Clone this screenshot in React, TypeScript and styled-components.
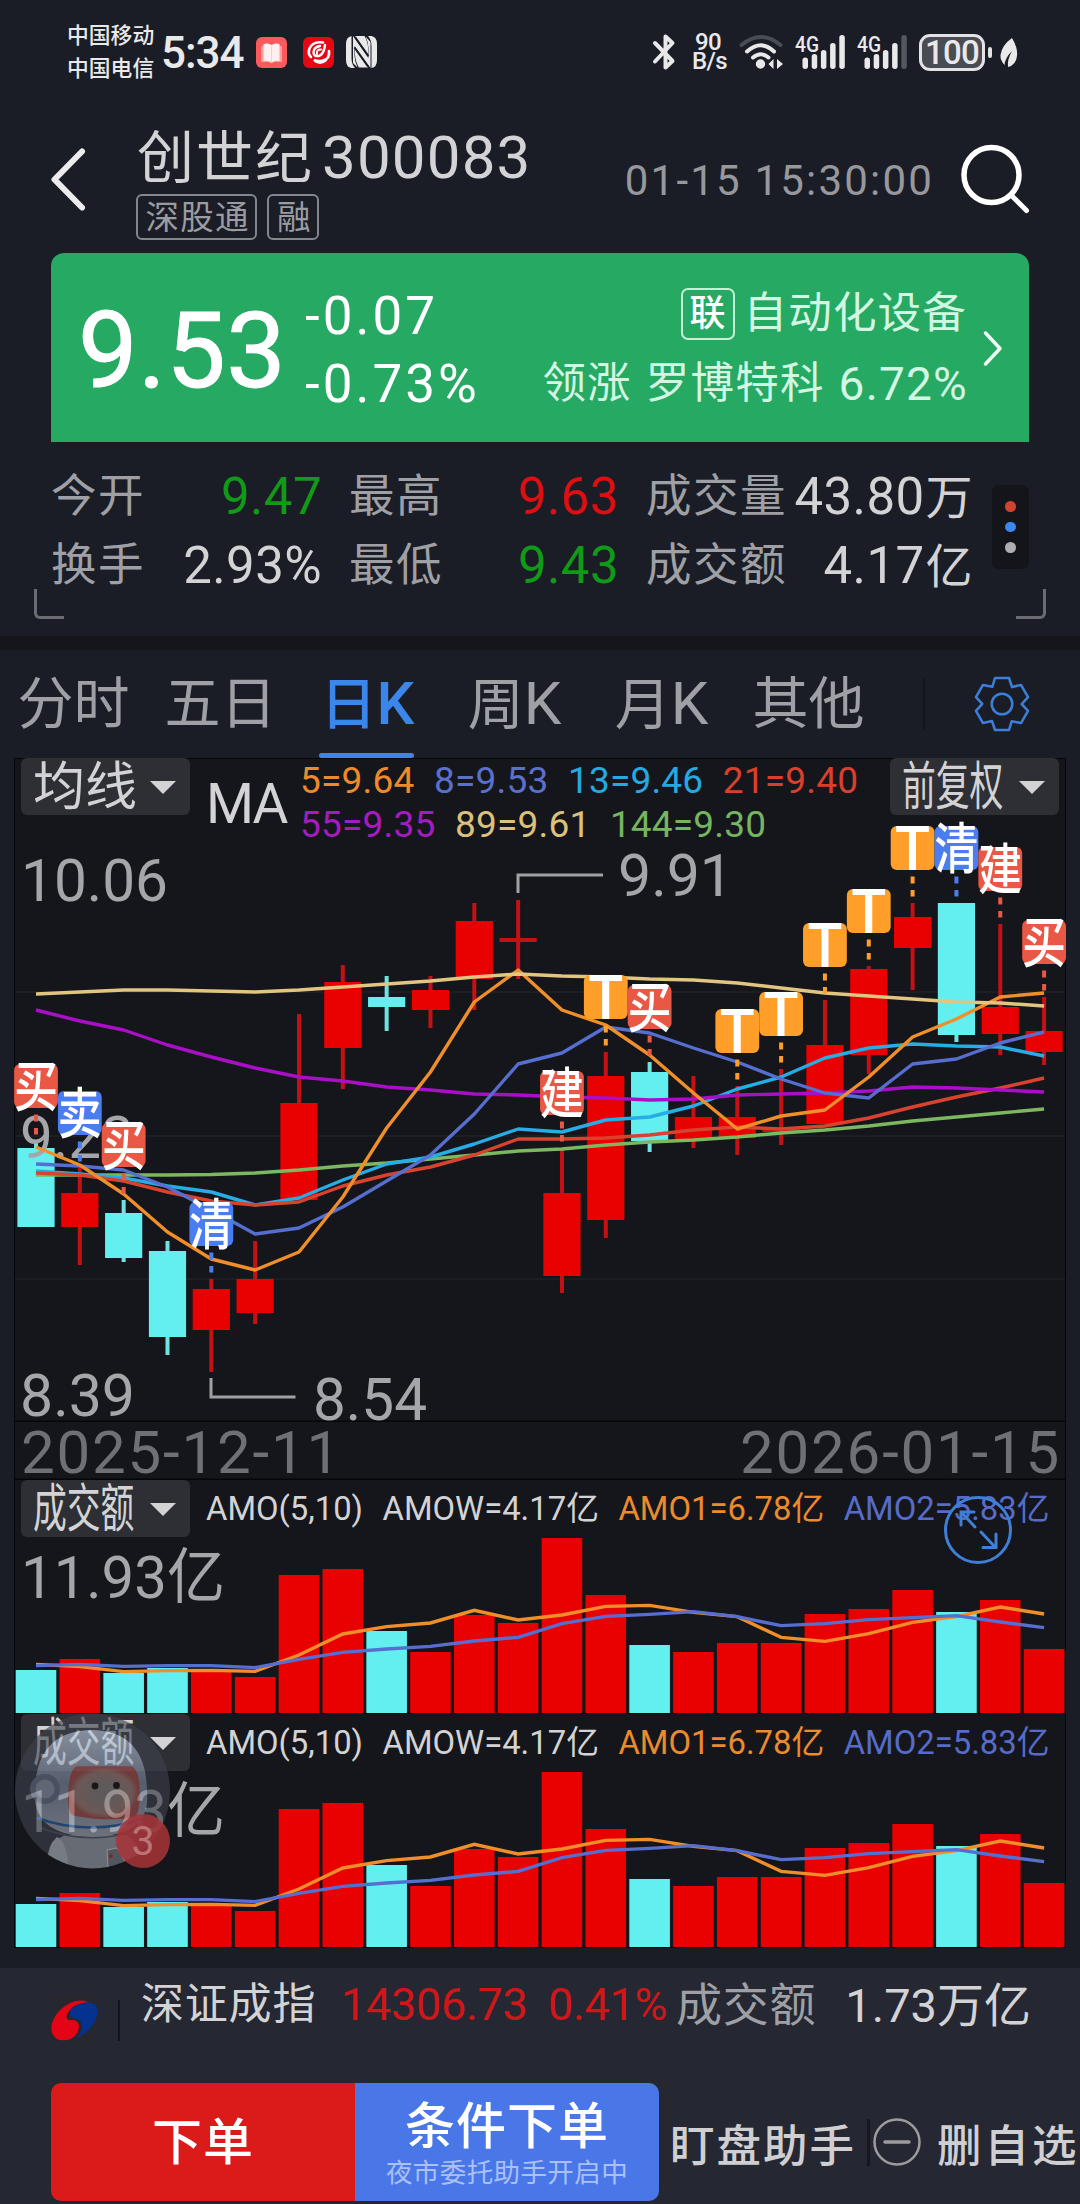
import React from "react";
import styled, { createGlobalStyle, css } from "styled-components";

const FONT = `Roboto, "Noto Sans CJK SC", sans-serif`;

const color = {
  page: "#1b1d26",
  panel: "#15161b",
  footer: "#252732",
  text: "#d3d3d5",
  muted: "#9fa0a5",
  dim: "#6f7075",
  red: "#e90000",
  cyan: "#63efef",
  green: "#26a963",
  blue: "#3b86ea",
  line: "#050609",
};

const Global = createGlobalStyle`
  html, body { margin: 0; padding: 0; background: ${color.page}; }
  body { font-family: ${FONT}; -webkit-font-smoothing: antialiased; }
  *, *::before, *::after { box-sizing: border-box; }
`;

const Screen = styled.main`
  position: relative;
  display: flex;
  flex-direction: column;
  width: 1080px;
  height: 2204px;
  overflow: hidden;
  background: ${color.page};
  color: ${color.text};
  white-space: nowrap;
  svg { display: block; flex: none; overflow: visible; }
`;

/* ---------- status bar ---------- */

const StatusBar = styled.div`
  display: flex;
  align-items: center;
  justify-content: space-between;
  height: 104px;
  padding: 0 63px 0 67px;
  color: #e9e9ea;
`;
const StatusGroup = styled.div`
  display: flex;
  align-items: center;
`;
const Carriers = styled.div`
  width: 94px;
  font-size: 21.8px;
  font-weight: 500;
  line-height: 33px;
`;
const Clock = styled.div`
  width: 95px;
  padding-top: 2px;
  font-size: 44px;
  font-weight: 500;
  line-height: 44px;
  letter-spacing: -1px;
`;
const AppIcons = styled.div`
  display: flex;
  align-items: center;
  svg + svg { margin-left: 16px; }
  svg + svg + svg { margin-left: 12px; }
`;
const NetSpeed = styled.div`
  width: 32px;
  margin: 0 15px 0 17px;
  font-size: 24px;
  font-weight: 500;
  line-height: 19px;
  text-align: center;
  letter-spacing: -0.6px;
`;
const Battery = styled.div`
  display: flex;
  align-items: center;
  justify-content: center;
  width: 66px;
  height: 37px;
  margin-left: 12px;
  border: 3px solid #e3e3e5;
  border-radius: 11px;
  background: #4a4c53;
  font-size: 33px;
  font-weight: 500;
  line-height: 31px;
  letter-spacing: -0.8px;
`;
const BatteryNub = styled.div`
  width: 4px;
  height: 11px;
  margin: 0 8px 0 3px;
  border-radius: 2px;
  background: #e3e3e5;
`;

const BookIcon = () => (
  <svg width="31" height="31" viewBox="0 0 31 31">
    <rect width="31" height="31" rx="6" fill="#fb5a5c" />
    <path d="M5 9h21v16h-8l-2.5 1.5L13 25H5z" fill="#fd9d9c" />
    <path d="M7.500 7q5-1.500 8 1q3-2.500 8-1v17q-5-1-8 1.500q-3-2.500-8-1.500z" fill="#fff0ef" />
    <path d="M15.500 9v16" stroke="#fcc" strokeWidth="1" />
  </svg>
);
const BrandIcon = () => (
  <svg width="31" height="31" viewBox="0 0 31 31" fill="none" stroke="#fff" strokeLinecap="round">
    <rect width="31" height="31" rx="6" fill="#e60714" stroke="none" />
    <path d="M20 5.500Q10 4 6.500 11.500Q4.500 17 8 20" strokeWidth="2.600" />
    <path d="M17 9Q11 10 10.500 15Q10.500 20 16 19Q21 17 22 8" strokeWidth="2.400" />
    <path d="M14 17Q13 12.500 18 12.500" strokeWidth="2" />
    <path d="M26 14Q27 22 20 23.500Q15 25 11 23Q17 28.500 23 23" strokeWidth="2.600" />
  </svg>
);
const NfcIcon = () => (
  <svg width="31" height="32" viewBox="0 0 31 32" fill="#e9e9ea">
    <path d="M5.500 0Q0 1 0 8v16q0 7 5.500 8H9Q5.500 28 5.500 22V4z" />
    <path d="M8 0h3L24 21V4Q24 2 22.500 0H25.500Q31 1 31 8v16q0 7-5.500 8H23L8 9z" transform="translate(0 0)" fill="none" />
    <path d="M25.500 32Q31 31 31 24V8q0-7-5.500-8H22Q25.500 4 25.500 10V28z" />
    <path d="M7 0L22.500 22V12Q22 5 19.500 0.500L24.500 6V32L8.500 10V20Q9 27 11.500 31.500L7 27z" />
    <path d="M9 12.500L22 31.500H13Q9.500 26 9 19z" />
    <path d="M9 0H18.500Q22 6 22.200 13V18.500z" />
    <path d="M8.500 11.500L22 30.500M9 1L22.300 20" stroke="#1b1d26" strokeWidth="2" fill="none" />
  </svg>
);
const BluetoothIcon = () => (
  <svg width="22" height="36" viewBox="0 0 22 36" fill="none" stroke="#e9e9ea" strokeWidth="4" strokeLinejoin="round" strokeLinecap="round">
    <path d="M2 9L19.500 27L12.500 33.500V2.500L19.500 9L2 27.500" />
  </svg>
);
const WifiIcon = () => (
  <svg width="44" height="34" viewBox="0 0 44 34" fill="none" strokeLinecap="round" strokeWidth="4">
    <path d="M2.500 10Q22-6 41.500 10" stroke="#4a4c53" />
    <path d="M8 16.500Q22 4 35 16.500" stroke="#e9e9ea" />
    <path d="M14 22.500Q22 16 29.500 22.500" stroke="#e9e9ea" />
    <circle cx="21.500" cy="29" r="4.700" fill="#e9e9ea" />
    <path d="M34.500 24v10l-5-5zM38 34V24l6 5z" fill="#e9e9ea" />
  </svg>
);
const SignalIcon = ({ full }: { full?: boolean }) => (
  <svg width="50" height="35" viewBox="0 0 50 35" fill="#e9e9ea">
    {[22.5, 19, 15, 8, 0].map((top, i) => (
      <rect key={top} x={7.500 + i * 9.200} y={top} width="5.500" height={34 - top} rx="2.700" fill={i === 4 && !full ? "#55575e" : "#e9e9ea"} />
    ))}
    <text x="0" y="16.500" fontSize="22" fontWeight="500" fontFamily="Roboto" textLength="24" lengthAdjust="spacingAndGlyphs">4G</text>
  </svg>
);
const SignalSlot = styled.div`
  margin-left: 12px;
`;
const LeafIcon = () => (
  <svg width="17" height="29" viewBox="0 0 17 29">
    <path d="M12 0Q18 10 17 18Q16 27 8 29Q7 22 12 13Q5 20 4.500 27Q0 22 0.500 17Q2 7 12 0z" fill="#e9e9ea" />
  </svg>
);

/* ---------- header ---------- */

const Header = styled.header`
  display: flex;
  height: 149px;
  padding: 0 51px;
`;
const BackButton = styled.div`
  width: 85px;
  padding-top: 44px;
`;
const TitleBlock = styled.div`
  flex: 1;
  padding-top: 25px;
`;
const StockTitle = styled.h1`
  margin: 0 0 9px 1px;
  height: 56px;
  font-size: 60px;
  font-weight: 400;
  line-height: 57px;
  letter-spacing: 1.2px;
`;
const StockName = styled.span`
  margin-right: 8px;
  font-size: 57px;
  letter-spacing: 2px;
`;
const Tags = styled.div`
  display: flex;
  gap: 10px;
`;
const Tag = styled.span`
  height: 46px;
  padding: 0 5.500px 0 7.500px;
  border: 2px solid #85868b;
  border-radius: 6px;
  color: #9b9ca1;
  font-size: 33.500px;
  line-height: 43px;
  letter-spacing: 1.300px;
`;
const QuoteTime = styled.div`
  padding-top: 54px;
  margin-right: 27px;
  color: #97989d;
  font-size: 42px;
  line-height: 46px;
  letter-spacing: 2.200px;
`;
const SearchSlot = styled.div`
  padding-top: 41px;
`;

/* ---------- price card ---------- */

const PriceCard = styled.section`
  display: flex;
  height: 189px;
  margin: 0 51px;
  padding: 0 26px 0 27px;
  border-radius: 13px 13px 0 0;
  background: ${color.green};
  color: #fff;
`;
const LastPrice = styled.div`
  width: 227px;
  padding-top: 42px;
  font-size: 106px;
  line-height: 112px;
  letter-spacing: 0.4px;
  -webkit-text-stroke: 1px #fff;
`;
const Changes = styled.div`
  flex: 1;
  padding-top: 29px;
  font-size: 53px;
  line-height: 68px;
  letter-spacing: 3px;
`;
const Sector = styled.div`
  display: flex;
  flex-direction: column;
  align-items: flex-end;
  padding-top: 29px;
  color: #d2f7e2;
  font-size: 43.5px;
  letter-spacing: 1.2px;
  margin-right: 16px;
`;
const SectorRow = styled.div`
  display: flex;
  align-items: center;
  height: 68px;
  line-height: 68px;
`;
const SectorFigure = styled.span`
  margin: 0 -1px 0 14px;
  font-size: 46px;
`;
const SectorLead = styled.span`
  margin-right: 14px;
`;
const LinkBadge = styled.span`
  display: flex;
  align-items: center;
  justify-content: center;
  width: 54px;
  height: 52px;
  margin-right: 9px;
  border: 2px solid #c4f1d6;
  border-radius: 7px;
  color: #fff;
  font-size: 36px;
  font-weight: 500;
  line-height: 48px;
  letter-spacing: 0;
`;
const SectorFirst = styled(SectorRow)`
  height: 66px;
  margin: -1px 0 3px;
`;
const CardArrow = styled.div`
  padding-top: 78px;
`;

/* ---------- stats ---------- */

const StatsSection = styled.section`
  position: relative;
  display: flex;
  height: 194px;
  padding: 20px 51px 0;
  &::before, &::after {
    content: "";
    position: absolute;
    top: 147px;
    width: 30px;
    height: 30px;
    border: 3px solid #6b6c71;
    border-top: 0;
  }
  &::before { left: 34px; border-right: 0; border-bottom-left-radius: 6px; }
  &::after { right: 34px; border-left: 0; border-bottom-right-radius: 6px; }
`;
const StatsGrid = styled.div`
  display: grid;
  grid-template-columns: 271px 270px 325px;
  grid-auto-rows: 69px;
  column-gap: 27px;
  width: 941px;
`;
const Stat = styled.div`
  display: flex;
  justify-content: space-between;
  line-height: 69px;
`;
const StatLabel = styled.span`
  color: ${color.muted};
  font-size: 45.5px;
  letter-spacing: 1.5px;
`;
const StatValue = styled.span<{ $tone?: string }>`
  color: ${(p) => p.$tone ?? color.text};
  font-size: 51px;
  letter-spacing: 0.4px;
`;
const Unit = styled.span`
  margin: 0 -2px 0 1px;
  font-size: 47px;
`;
const MorePanel = styled.div`
  display: flex;
  flex-direction: column;
  align-items: center;
  justify-content: center;
  gap: 10px;
  width: 37px;
  height: 84px;
  margin-top: 23px;
  border-radius: 7px;
  background: #14151a;
`;
const MoreDot = styled.i<{ $fill: string }>`
  width: 10.500px;
  height: 10.500px;
  border-radius: 50%;
  background: ${(p) => p.$fill};
`;
const Band = styled.div`
  height: 14px;
  background: #15161b;
`;

/* ---------- tabs ---------- */

const Tabs = styled.nav`
  display: flex;
  align-items: center;
  height: 108px;
`;
const Tab = styled.div<{ $active?: boolean }>`
  position: relative;
  width: 147px;
  height: 108px;
  color: ${(p) => (p.$active ? color.blue : color.muted)};
  font-size: 56px;
  font-weight: ${(p) => (p.$active ? 500 : 400)};
  line-height: 108px;
  text-align: center;
  ${(p) =>
    p.$active &&
    css`
      &::after {
        content: "";
        position: absolute;
        left: 25px;
        bottom: 0;
        width: 95px;
        height: 5px;
        border-radius: 3px;
        background: ${color.blue};
      }
    `}
`;
const TabLatin = styled.span`
  font-size: 60px;
`;
const TabDivider = styled.i`
  width: 2px;
  height: 52px;
  margin: 0 48px 0 41px;
  background: #14161b;
`;

/* ---------- charts ---------- */

const ChartStack = styled.section`
  width: 1052px;
  margin-left: 14px;
  background: ${color.panel};
  box-shadow: inset 0 1px ${color.line}, inset 1px 0 ${color.line}, inset -1px 0 ${color.line}, inset 0 -1px ${color.line};
`;
const ChartPanel = styled.div<{ $height: number }>`
  display: grid;
  height: ${(p) => p.$height}px;
  box-shadow: inset 0 -1.500px ${color.line};
  > * { grid-area: 1 / 1; }
`;
const PanelHead = styled.div`
  display: flex;
  align-items: flex-start;
  height: 90px;
  padding: 0 7px;
`;
const Dropdown = styled.div`
  display: flex;
  align-items: center;
  justify-content: space-between;
  width: 169px;
  height: 57px;
  padding: 1px 14px 0 12px;
  border-radius: 6px;
  background: #2e2f34;
`;
const DropText = styled.span<{ $squeeze: number }>`
  width: 104px;
  font-size: 52px;
  line-height: 57px;
  transform: scaleX(${(p) => p.$squeeze});
  transform-origin: left;
`;
const Caret = styled.i`
  border: 13.500px solid transparent;
  border-top: 13.500px solid ${color.text};
  border-bottom: 0;
`;
const MaName = styled.span`
  width: 94px;
  padding: 24px 0 0 16px;
  font-size: 55px;
  line-height: 44px;
  letter-spacing: -2px;
`;
const MaRows = styled.div`
  flex: 1;
  padding: 1px 0 0 16px;
`;
const MaRow = styled.div`
  display: flex;
  gap: 19.500px;
  height: 44px;
  font-size: 37px;
  line-height: 44px;
  letter-spacing: 0.2px;
`;
const Legend = styled.span<{ $c: string }>`
  color: ${(p) => p.$c};
`;
const DateRow = styled.div`
  display: flex;
  justify-content: space-between;
  height: 58px;
  padding: 0 5px 0 7px;
  box-shadow: inset 0 -1.500px ${color.line};
  color: ${color.dim};
  font-size: 60px;
  line-height: 61px;
  letter-spacing: 1.800px;
`;
const AmoRow = styled.div`
  display: flex;
  gap: 19.500px;
  padding-left: 16px;
  font-size: 32.8px;
  line-height: 58px;
`;
const ExpandButton = styled.div`
  position: absolute;
  left: 944px;
  top: 1496px;
`;
const Assistant = styled.div`
  position: absolute;
  left: 15px;
  top: 1713px;
`;

const STEP = 43.83;
const cx = (i: number) => 36 + STEP * i;

type Candle = [up: 0 | 1, open: number, close: number, high: number, low: number];
const candles: Candle[] = [
  [0, 1148, 1227, 1141, 1227],
  [1, 1193, 1227, 1168, 1265],
  [0, 1213, 1258, 1200, 1262],
  [0, 1251, 1337, 1241, 1355],
  [1, 1289, 1330, 1279, 1372],
  [1, 1279, 1313, 1241, 1324],
  [1, 1103, 1200, 1014, 1200],
  [1, 982, 1048, 965, 1089],
  [0, 997, 1007, 976, 1031],
  [1, 990, 1010, 976, 1028],
  [1, 921, 979, 903, 1010],
  [1, 938, 942, 900, 979],
  [1, 1193, 1276, 1148, 1293],
  [1, 1076, 1220, 1052, 1238],
  [0, 1072, 1141, 1062, 1152],
  [1, 1117, 1139, 1076, 1148],
  [1, 1117, 1138, 1086, 1155],
  [1, 1129, 1132, 1069, 1145],
  [1, 1045, 1124, 1000, 1124],
  [1, 969, 1055, 966, 1074],
  [1, 917, 948, 903, 990],
  [0, 903, 1035, 903, 1042],
  [1, 1007, 1034, 924, 1055],
  [1, 1031, 1052, 997, 1065],
];

const averages: { c: string; y: number[] }[] = [
  { c: "#7cb85f", y: [1175, 1175, 1175, 1175, 1174.500, 1173, 1170, 1166, 1163, 1159, 1155, 1151, 1149, 1145, 1142, 1140, 1137, 1133, 1130, 1126, 1121, 1117, 1113, 1109] },
  { c: "#27ade6", y: [1171, 1174, 1178, 1186, 1192, 1205, 1198, 1180, 1164, 1157, 1144, 1129, 1132, 1120, 1117, 1106, 1089, 1077, 1058, 1048, 1044, 1046, 1047, 1056] },
  { c: "#d8432f", y: [1173, 1175, 1181, 1192, 1201, 1205, 1202, 1186, 1175, 1167, 1155, 1139, 1139, 1138, 1135, 1130, 1127, 1129, 1126, 1118, 1107, 1097, 1088, 1078] },
  { c: "#a90fc6", y: [1010, 1021, 1030, 1045, 1057, 1068, 1077, 1081, 1087, 1090, 1094, 1095, 1097, 1098, 1100, 1099, 1095, 1094, 1093, 1091, 1087, 1088, 1090, 1092] },
  { c: "#566ecf", y: [1164, 1166, 1170, 1187, 1210, 1234, 1228, 1207, 1181, 1155, 1114, 1064, 1053, 1027, 1033, 1048, 1062, 1079, 1093, 1098, 1064, 1059, 1043, 1032] },
  { c: "#f08f2a", y: [1147, 1165, 1194, 1232, 1259, 1270, 1252, 1197, 1128, 1072, 1002, 970, 1010, 1025, 1055, 1093, 1129, 1116, 1110, 1077, 1037, 1019, 997, 993] },
  { c: "#e2c57f", y: [994, 992, 990, 990, 991, 992, 990, 987, 984, 981, 977, 974, 976, 977, 979, 980, 983, 988, 993, 996, 999, 1002, 1003, 1006] },
];

const MARK = { buy: "#e85845", sell: "#4a7df0", t: "#ff9f2a" };
const marks: [i: number, label: string, fill: string][] = [
  [0, "买", MARK.buy],
  [1, "卖", MARK.sell],
  [2, "买", MARK.buy],
  [4, "清", MARK.sell],
  [12, "建", MARK.buy],
  [13, "T", MARK.t],
  [14, "买", MARK.buy],
  [16, "T", MARK.t],
  [17, "T", MARK.t],
  [18, "T", MARK.t],
  [19, "T", MARK.t],
  [20, "T", MARK.t],
  [21, "清", MARK.sell],
  [22, "建", MARK.buy],
  [23, "买", MARK.buy],
];

const points = (ys: number[]) => ys.map((y, i) => `${cx(i)},${y}`).join(" ");

const AxisLabel = ({ x, y, w, children }: { x: number; y: number; w: number; children: string }) => (
  <text x={x} y={y} fontSize="60" fill="#a5a6a9" fontFamily={FONT} textLength={w} lengthAdjust="spacingAndGlyphs">
    {children}
  </text>
);

const CandleChart = () => (
  <svg width="1052" height="664" viewBox="14 758 1052 664">
    {[992, 1136, 1279].map((y) => (
      <path key={y} d={`M15 ${y}H1065`} stroke="#212227" strokeWidth="1.500" />
    ))}
    {candles.map(([up, open, close, high, low], i) => {
      const fill = up ? color.red : color.cyan;
      return (
        <g key={i}>
          <rect x={cx(i) - 2} y={high} width="4" height={low - high} fill={up ? "#c41114" : "#6fe3e2"} />
          <rect x={cx(i) - 18.600} y={open} width="37.200" height={close - open} fill={close - open < 6 ? "#c41114" : fill} />
        </g>
      );
    })}
    <AxisLabel x={21} y={901} w={147}>10.06</AxisLabel>
    <AxisLabel x={20} y={1158} w={114}>9.23</AxisLabel>
    <AxisLabel x={20} y={1416} w={115}>8.39</AxisLabel>
    {averages.map((a) => (
      <polyline key={a.c} points={points(a.y)} fill="none" stroke={a.c} strokeWidth="3.400" strokeLinejoin="round" />
    ))}
    <path d="M518 893V875H603" fill="none" stroke="#a0a1a4" strokeWidth="3" />
    <AxisLabel x={618} y={896} w={115}>9.91</AxisLabel>
    <path d="M211 1378V1397H295.500" fill="none" stroke="#a0a1a4" strokeWidth="3" />
    <AxisLabel x={313} y={1420} w={114}>8.54</AxisLabel>
    {marks.map(([i, label, fill]) => {
      const x = cx(i);
      const top = candles[i][3] - 77;
      const latin = label === "T";
      return (
        <g key={i}>
          <path d={`M${x} ${top + 50.500}v20`} stroke={fill} strokeWidth="4" strokeDasharray="7 6.500" />
          <rect x={x - 21.900} y={top} width="43.800" height="44" rx="6" fill={fill} />
          <text
            x={x - (latin ? 17.500 : 22)}
            y={latin ? top + 43.500 : top + 42}
            fontSize={latin ? 61 : 55}
            fontWeight="500"
            fontFamily={FONT}
            fill="#fff"
            textLength={latin ? 35 : 44}
            lengthAdjust="spacingAndGlyphs"
          >
            {label}
          </text>
        </g>
      );
    })}
  </svg>
);

const amoTops = [190, 179, 193, 188, 191.5, 197, 95, 89, 151, 172, 135, 143, 58, 115, 165, 172, 163, 163, 134, 129, 110, 132, 120, 169];
const amoDown = [0, 2, 3, 8, 14, 21];
const amo5 = [583, 590, 605, 602, 601, 604, 555, 492, 470, 459, 421, 450, 435, 409, 406, 427, 440, 502, 514, 491, 457, 440, 411, 432];
const amo10 = [587, 583, 589, 587, 587, 593, 568, 547, 537, 529, 513, 502, 461, 439, 433, 425, 440, 467, 461, 449, 443, 437, 456, 473];

const TurnoverChart = () => (
  <svg width="1052" height="234" viewBox="14 0 1052 234">
    <AxisLabel x={21} y={118} w={204}>11.93亿</AxisLabel>
    {amoTops.map((top, i) => (
      <rect key={i} x={cx(i) - 20.300} y={top} width="40.600" height={233 - top} fill={amoDown.includes(i) ? color.cyan : color.red} />
    ))}
    <polyline points={points(amo5.map((v) => v / 3 - 10))} fill="none" stroke="#f08f2a" strokeWidth="3.400" />
    <polyline points={points(amo10.map((v) => v / 3 - 10))} fill="none" stroke="#566ecf" strokeWidth="3.400" />
  </svg>
);

const TurnoverPanel = () => (
  <ChartPanel $height={234}>
    <TurnoverChart />
    <PanelHead>
      <Dropdown>
        <DropText $squeeze={0.65}>成交额</DropText>
        <Caret />
      </Dropdown>
      <AmoRow>
        <span>AMO(5,10)</span>
        <span>AMOW=4.17亿</span>
        <Legend $c="#ec8b2c">AMO1=6.78亿</Legend>
        <Legend $c="#566cc8">AMO2=5.83亿</Legend>
      </AmoRow>
    </PanelHead>
  </ChartPanel>
);

const GearIcon = () => {
  const base = [[-7, -26], [7, -26], [10, -17]];
  const pts: string[] = [];
  for (let k = 0; k < 6; k++) {
    const a = (k * Math.PI) / 3;
    base.forEach(([x, y]) => {
      pts.push(`${(x * Math.cos(a) - y * Math.sin(a)).toFixed(2)},${(x * Math.sin(a) + y * Math.cos(a)).toFixed(2)}`);
    });
  }
  return (
    <svg width="58" height="58" viewBox="-29 -29 58 58" fill="none" stroke="#3c7fd9" strokeWidth="2.500" strokeLinejoin="round">
      <polygon points={pts.join(" ")} />
      <circle r="10.300" />
    </svg>
  );
};

const AssistantAvatar = () => (
  <svg width="158" height="158" viewBox="0 0 158 158">
    <defs>
      <clipPath id="face"><circle cx="77.500" cy="78" r="77.500" /></clipPath>
      <linearGradient id="shell" x1="0" y1="0" x2="0" y2="1">
        <stop offset="0" stopColor="#bccbe0" />
        <stop offset="0.500" stopColor="#7f8ba0" />
        <stop offset="1" stopColor="#a3abb8" />
      </linearGradient>
      <radialGradient id="visor">
        <stop offset="0.300" stopColor="#8c8580" />
        <stop offset="0.800" stopColor="#a3807a" />
        <stop offset="1" stopColor="#a65350" />
      </radialGradient>
    </defs>
    <g clipPath="url(#face)" opacity="0.62">
      <rect width="158" height="158" fill="#3f434e" />
      <path d="M33 158Q32 130 50 122H112Q128 134 130 158z" fill="#98a0ac" />
      <path d="M42 124Q52 128 54 158H33Q30 134 42 124z" fill="#b3bac4" />
      <path d="M20 80Q20 18 77 17Q132 18 132 80Q136 122 77 124Q18 122 20 80z" fill="url(#shell)" />
      <circle cx="30" cy="76" r="15" fill="#69748a" />
      <circle cx="30" cy="76" r="9.500" fill="#8e99ab" />
      <path d="M62 54H116Q124 56 124 80Q124 100 119 104Q90 108 59 102Q53 100 54 80Q55 56 62 54z" fill="url(#visor)" stroke="#b04f4f" strokeWidth="1.500" />
      <path d="M22 105Q75 124 132 105" fill="none" stroke="#2b62a8" strokeWidth="2.500" />
      <path d="M26 115Q75 134 128 116" fill="none" stroke="#565e6d" strokeWidth="1.500" />
      <path d="M92 137l10-2 9 16-18 4z" fill="#777d86" stroke="#dddddd" strokeWidth="1" />
      <circle cx="96" cy="143" r="2" fill="#b83434" />
      <circle cx="80" cy="73" r="3.400" fill="#17181c" />
      <circle cx="101.500" cy="72.500" r="3.400" fill="#17181c" />
    </g>
    <circle cx="128" cy="128" r="27" fill="#a63338" fillOpacity="0.86" />
    <text x="128" y="142" fontSize="41" fontFamily={FONT} fill="#ba7475" textAnchor="middle">3</text>
  </svg>
);

/* ---------- footer ---------- */

const Gap = styled.div`
  height: 20px;
`;
const Footer = styled.footer`
  height: 236px;
  background: ${color.footer};
`;
const IndexBar = styled.div`
  display: flex;
  height: 115px;
  padding-left: 51px;
`;
const LogoBox = styled.div`
  width: 47px;
  height: 48px;
  margin-top: 28px;
  background: #27272f;
`;
const IndexDivider = styled.i`
  width: 2px;
  height: 41px;
  margin: 32px 21px 0 20px;
  background: #15161b;
`;
const IndexGrid = styled.div`
  display: grid;
  grid-template-columns: 200px 207px 128px 355px;
  height: 70px;
  font-size: 43px;
  line-height: 73px;
  letter-spacing: 0.8px;
`;
const IndexValue = styled.span`
  color: #d01619;
  font-size: 45px;
  letter-spacing: -0.3px;
`;
const IndexAmount = styled.span`
  display: flex;
  justify-content: space-between;
  color: ${color.muted};
  font-size: 46px;
  line-height: 75px;
`;
const IndexAmountValue = styled.span`
  color: ${color.text};
  letter-spacing: 0;
  font-size: 47px;
`;
const Actions = styled.div`
  display: flex;
  align-items: center;
  height: 118px;
  padding-left: 51px;
  color: #cfcfd2;
  font-size: 44.5px;
`;
const ActionButton = styled.div<{ $bg: string; $side: "left" | "right" }>`
  display: flex;
  flex-direction: column;
  align-items: center;
  justify-content: center;
  flex: none;
  width: 304px;
  height: 118px;
  padding-top: 2px;
  border-radius: ${(p) => (p.$side === "left" ? "10px 0 0 10px" : "0 10px 10px 0")};
  background: ${(p) => p.$bg};
  color: #fff;
  font-size: 50px;
  font-weight: 500;
  line-height: 58px;
  letter-spacing: 1px;
`;
const ActionNote = styled.span`
  height: 33px;
  color: #aac0f6;
  font-size: 26.5px;
  font-weight: 400;
  line-height: 33px;
  letter-spacing: 0.4px;
`;
const WatchLink = styled.span`
  margin-left: 11px;
  letter-spacing: 2px;
  font-weight: 500;
`;
const ActionDivider = styled.i`
  flex: none;
  width: 3px;
  height: 47px;
  margin: 0 3px 0 11px;
  background: #17181d;
`;
const RemoveLink = styled.span`
  margin-left: 16px;
  letter-spacing: 3px;
  font-weight: 500;
`;

const UP = "#dc1012";
const DOWN = "#119a17";

export default function App() {
  return (
    <Screen>
      <Global />
      <StatusBar>
        <StatusGroup>
          <Carriers>
            中国移动
            <br />
            中国电信
          </Carriers>
          <Clock>5:34</Clock>
          <AppIcons>
            <BookIcon />
            <BrandIcon />
            <NfcIcon />
          </AppIcons>
        </StatusGroup>
        <StatusGroup>
          <BluetoothIcon />
          <NetSpeed>
            90
            <br />
            B/s
          </NetSpeed>
          <WifiIcon />
          <SignalSlot><SignalIcon full /></SignalSlot>
          <SignalSlot><SignalIcon /></SignalSlot>
          <Battery>100</Battery>
          <BatteryNub />
          <LeafIcon />
        </StatusGroup>
      </StatusBar>

      <Header>
        <BackButton>
          <svg width="36" height="64" viewBox="0 0 36 64" fill="none" stroke="#ececee" strokeWidth="6" strokeLinecap="round" strokeLinejoin="round">
            <path d="M31 3.500L3.500 31.500L31 59.500" />
          </svg>
        </BackButton>
        <TitleBlock>
          <StockTitle>
            <StockName>创世纪</StockName>300083
          </StockTitle>
          <Tags>
            <Tag>深股通</Tag>
            <Tag>融</Tag>
          </Tags>
        </TitleBlock>
        <QuoteTime>01-15 15:30:00</QuoteTime>
        <SearchSlot>
          <svg width="68" height="68" viewBox="0 0 68 68" fill="none" stroke="#fff" strokeLinecap="round">
            <circle cx="30.500" cy="30" r="27.500" strokeWidth="5.500" />
            <path d="M50 50L65.500 65.500" strokeWidth="5" />
          </svg>
        </SearchSlot>
      </Header>

      <PriceCard>
        <LastPrice>9.53</LastPrice>
        <Changes>
          <div>-0.07</div>
          <div>-0.73%</div>
        </Changes>
        <Sector>
          <SectorFirst>
            <LinkBadge>联</LinkBadge>自动化设备
          </SectorFirst>
          <SectorRow>
            <SectorLead>领涨</SectorLead>
            <span>罗博特科</span>
            <SectorFigure>6.72%</SectorFigure>
          </SectorRow>
        </Sector>
        <CardArrow>
          <svg width="20" height="36" viewBox="0 0 20 36" fill="none" stroke="#effff6" strokeWidth="3.500" strokeLinecap="round" strokeLinejoin="round">
            <path d="M2.500 2L17 17.500L2.500 33" />
          </svg>
        </CardArrow>
      </PriceCard>

      <StatsSection>
        <StatsGrid>
          <Stat><StatLabel>今开</StatLabel><StatValue $tone={DOWN}>9.47</StatValue></Stat>
          <Stat><StatLabel>最高</StatLabel><StatValue $tone={UP}>9.63</StatValue></Stat>
          <Stat><StatLabel>成交量</StatLabel><StatValue>43.80<Unit>万</Unit></StatValue></Stat>
          <Stat><StatLabel>换手</StatLabel><StatValue>2.93%</StatValue></Stat>
          <Stat><StatLabel>最低</StatLabel><StatValue $tone={DOWN}>9.43</StatValue></Stat>
          <Stat><StatLabel>成交额</StatLabel><StatValue>4.17<Unit>亿</Unit></StatValue></Stat>
        </StatsGrid>
        <MorePanel>
          <MoreDot $fill="#d0442f" />
          <MoreDot $fill="#3b87ea" />
          <MoreDot $fill="#aeaeb2" />
        </MorePanel>
      </StatsSection>
      <Band />

      <Tabs>
        <Tab>分时</Tab>
        <Tab>五日</Tab>
        <Tab $active>日<TabLatin>K</TabLatin></Tab>
        <Tab>周<TabLatin>K</TabLatin></Tab>
        <Tab>月<TabLatin>K</TabLatin></Tab>
        <Tab>其他</Tab>
        <TabDivider />
        <GearIcon />
      </Tabs>

      <ChartStack>
        <ChartPanel $height={664}>
          <CandleChart />
          <PanelHead>
            <Dropdown>
              <DropText $squeeze={1}>均线</DropText>
              <Caret />
            </Dropdown>
            <MaName>MA</MaName>
            <MaRows>
              <MaRow>
                <Legend $c="#ee8a27">5=9.64</Legend>
                <Legend $c="#5a70cb">8=9.53</Legend>
                <Legend $c="#25a9e2">13=9.46</Legend>
                <Legend $c="#d93f2b">21=9.40</Legend>
              </MaRow>
              <MaRow>
                <Legend $c="#a41cc0">55=9.35</Legend>
                <Legend $c="#dcc07c">89=9.61</Legend>
                <Legend $c="#76b560">144=9.30</Legend>
              </MaRow>
            </MaRows>
            <Dropdown>
              <DropText $squeeze={0.65}>前复权</DropText>
              <Caret />
            </Dropdown>
          </PanelHead>
        </ChartPanel>
        <DateRow>
          <span>2025-12-11</span>
          <span>2026-01-15</span>
        </DateRow>
        <TurnoverPanel />
        <TurnoverPanel />
      </ChartStack>
      <Gap />

      <Footer>
        <IndexBar>
          <LogoBox>
            <svg width="47" height="48" viewBox="0 0 47 48">
              <path d="M37 6Q24 1 9 14Q-2 26 1 37Q5 46 16 44Q27 41 28 31Q28 24 21 24Q14 25 16 18Q22 7 37 6z" fill="#e40415" />
              <path d="M30 8Q18 11 19 19Q20 22 26 23Q33 26 30 36Q28 40 24 43Q36 38 43 27Q50 13 43 8Q38 5 30 8z" fill="#06328f" />
            </svg>
          </LogoBox>
          <IndexDivider />
          <IndexGrid>
            <span>深证成指</span>
            <IndexValue>14306.73</IndexValue>
            <IndexValue>0.41%</IndexValue>
            <IndexAmount>
              成交额
              <IndexAmountValue>1.73万亿</IndexAmountValue>
            </IndexAmount>
          </IndexGrid>
        </IndexBar>
        <Actions>
          <ActionButton $bg="#db1a1a" $side="left">下单</ActionButton>
          <ActionButton $bg="#4a77e8" $side="right">
            条件下单
            <ActionNote>夜市委托助手开启中</ActionNote>
          </ActionButton>
          <WatchLink>盯盘助手</WatchLink>
          <ActionDivider />
          <svg width="48" height="48" viewBox="0 0 48 48" fill="none" stroke="#9c9c9f" strokeWidth="2.500" strokeLinecap="round">
            <circle cx="24" cy="24" r="22.500" />
            <path d="M12 24H36" strokeWidth="3.500" />
          </svg>
          <RemoveLink>删自选</RemoveLink>
        </Actions>
      </Footer>

      <ExpandButton>
        <svg width="68" height="68" viewBox="0 0 68 68" fill="none" stroke="#3f7fd6" strokeWidth="3" strokeLinecap="round">
          <circle cx="34" cy="34" r="32.500" />
          <path d="M31 31L18 17M17 29V16H30" />
          <path d="M37 36L51 51M39 51.500H52V38" />
        </svg>
      </ExpandButton>
      <Assistant>
        <AssistantAvatar />
      </Assistant>
    </Screen>
  );
}
